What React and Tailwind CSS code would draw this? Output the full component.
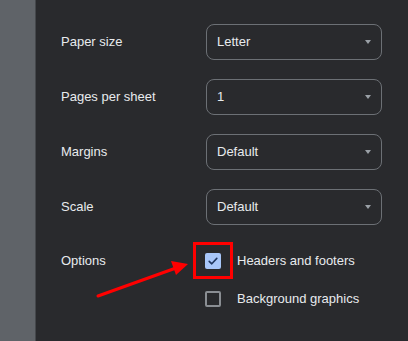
const rows = [
  { label: 'Paper size', value: 'Letter' },
  { label: 'Pages per sheet', value: '1' },
  { label: 'Margins', value: 'Default' },
  { label: 'Scale', value: 'Default' },
];

function Select({ value }) {
  return (
    <div className="flex items-center justify-between w-[176px] h-[36px] rounded-[8px] border border-[#6c7075] pl-[10px] pr-[10px]">
      <span>{value}</span>
      <span className="w-0 h-0 border-l-[3.5px] border-r-[3.5px] border-t-[4px] border-l-transparent border-r-transparent border-t-[#9aa0a6]" />
    </div>
  );
}

export default function App() {
  return (
    <div
      className="relative flex w-[408px] h-[341px] overflow-hidden text-[13px] text-[#e8eaed] bg-[#292a2d]"
      style={{ fontFamily: '"Liberation Sans", Arial, sans-serif' }}
    >
      <div className="w-[36px] shrink-0 bg-[#5f6368] border-r border-[#45484c]" />
      <div className="flex flex-col pl-[25px] pt-[24px] gap-[19px]">
        {rows.map(r => (
          <div key={r.label} className="flex items-center">
            <div className="w-[145px]">{r.label}</div>
            <Select value={r.value} />
          </div>
        ))}
        <div className="flex mt-[5px]">
          <div className="w-[144px] h-[24px] flex items-center">Options</div>
          <div className="flex flex-col gap-[14px]">
            <div className="flex items-center h-[24px]">
              <div className="relative w-[16px] h-[16px] rounded-[2px] bg-[#a8c7fa] flex items-center justify-center">
                <svg width="12" height="12" viewBox="0 0 12 12" fill="none">
                  <path d="M2.2 6.3 L4.8 8.8 L9.8 3.4" stroke="#1f3760" strokeWidth="1.6" strokeLinecap="round" strokeLinejoin="round" />
                </svg>
                <div className="absolute left-[-12px] top-[-11px] w-[40px] h-[37px] border-[3px] border-[#ff0000]" />
              </div>
              <span className="ml-[16px]">Headers and footers</span>
            </div>
            <div className="flex items-center h-[24px]">
              <div className="w-[16px] h-[16px] rounded-[2px] border-2 border-[#8a8e93]" />
              <span className="ml-[16px]">Background graphics</span>
            </div>
          </div>
        </div>
      </div>
      <svg className="absolute left-0 top-0 pointer-events-none" width="408" height="341" viewBox="0 0 408 341">
        <line x1="98" y1="296" x2="176" y2="268" stroke="#ff0000" strokeWidth="3" strokeLinecap="round" />
        <polygon points="188,264 171,261 176,275" fill="#ff0000" />
      </svg>
    </div>
  );
}
